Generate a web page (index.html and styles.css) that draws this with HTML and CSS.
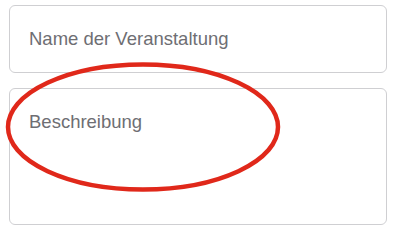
FILE: index.html
```html
<!DOCTYPE html>
<html>
<head>
    <title>Veranstaltung</title>
    <link rel="stylesheet" href="styles.css">
</head>
<body>
    <div class="form-container">
        <div class="field field-name">
            <span class="placeholder">Name der Veranstaltung</span>
        </div>
        <div class="field field-description">
            <span class="placeholder">Beschreibung</span>
        </div>
        <svg class="highlight" width="402" height="235" viewBox="0 0 402 235">
            <ellipse cx="143" cy="127" rx="135" ry="62.5" fill="none" stroke="#e0281a" stroke-width="4.5"/>
        </svg>
    </div>
</body>
</html>
```

FILE: styles.css
```css
body {
    margin: 0;
    font-family: "Liberation Sans", Arial, sans-serif;
    background-color: #ffffff;
}

.form-container {
    position: relative;
    display: flex;
    flex-direction: column;
    gap: 15px;
    padding: 5px 15px 0 9px;
}

.field {
    border: 1px solid #cfcfd2;
    border-radius: 6px;
    padding: 0 19px;
}

.field-name {
    height: 66px;
    display: flex;
    align-items: center;
}

.field-description {
    padding-top: 22px;
    height: 113px;
}

.placeholder {
    font-size: 18.5px;
    color: #6e6e73;
}

.highlight {
    position: absolute;
    top: 0;
    left: 0;
    pointer-events: none;
}
```
